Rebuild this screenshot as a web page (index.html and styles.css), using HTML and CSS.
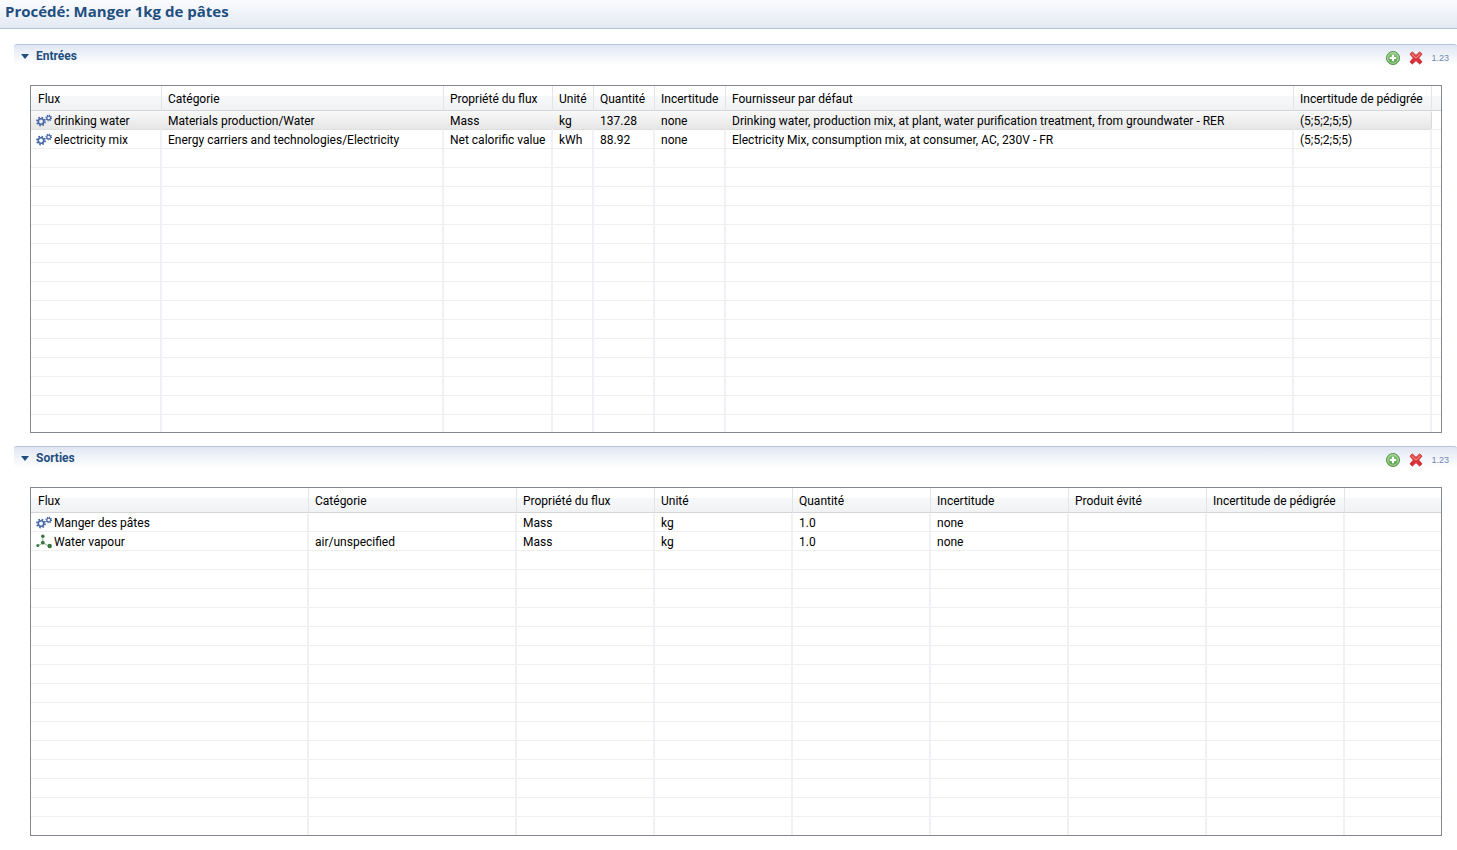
FILE: index.html
```html
<!DOCTYPE html>
<html lang="fr">
<head>
<meta charset="utf-8">
<title>Procédé: Manger 1kg de pâtes</title>
<link rel="stylesheet" href="styles.css">
</head>
<body>
<svg class="defs" aria-hidden="true">
  <defs>
    <linearGradient id="green" x1="0" y1="0" x2="0" y2="1"><stop offset="0" stop-color="#8cc87c"/><stop offset="1" stop-color="#4f9e45"/></linearGradient>
    <linearGradient id="red" x1="0" y1="0" x2="0" y2="1"><stop offset="0" stop-color="#e8564c"/><stop offset="1" stop-color="#d3202c"/></linearGradient>
    <symbol id="gears" viewBox="0 0 16 16">
      <g fill="none" stroke="#4668a8">
        <circle cx="5" cy="8.5" r="2.7" stroke-width="1.6"/>
        <circle cx="5" cy="8.5" r="4" stroke-width="1.8" stroke-dasharray="1.6 1.542"/>
        <circle cx="12.7" cy="5" r="1.9" stroke-width="1.2"/>
        <circle cx="12.7" cy="5" r="2.8" stroke-width="1.2" stroke-dasharray="1.1 1.099"/>
      </g>
    </symbol>
    <symbol id="molecule" viewBox="0 0 16 16">
      <path d="M6.8 2.5v6.2M6.8 8.7L2 12M6.8 8.7L13.5 12.5" fill="none" stroke="#8db596" stroke-width="1"/>
      <g fill="#38783f"><circle cx="6.8" cy="2.3" r="1.8"/><circle cx="6.8" cy="8.7" r="1.9"/><circle cx="1.8" cy="11.6" r="1.5"/><circle cx="13.7" cy="12" r="2.2"/></g>
    </symbol>
    <symbol id="add" viewBox="0 0 16 16">
      <circle cx="8" cy="8" r="6.5" fill="url(#green)" stroke="#55934b"/>
      <circle cx="8" cy="8" r="5.3" fill="none" stroke="#b5dca9" stroke-width="1"/>
      <path d="M8 4.8v6.4M4.8 8h6.4" stroke="#fff" stroke-width="2.2"/>
    </symbol>
    <symbol id="remove" viewBox="0 0 16 16">
      <path d="M2 4.2L4.3 2 8 5.4 11.7 2 14 4.2 10.6 8 14 11.8 11.7 14 8 10.6 4.3 14 2 11.8 5.4 8z" fill="url(#red)" stroke="#c9313a" stroke-width="1" stroke-linejoin="round"/>
      <path d="M3.6 4L8 8l4.4-4" fill="none" stroke="#f59a92" stroke-width="1"/>
    </symbol>
  </defs>
</svg>

<header class="form-head"><h1>Procédé: Manger 1kg de pâtes</h1></header>

<main class="form-body">
  <section class="section" aria-labelledby="entrees">
    <div class="section-bar">
      <h2 id="entrees"><button class="toggle" type="button" aria-expanded="true"><svg class="twistie" viewBox="0 0 8 5"><path d="M0 0h8L4 5z"/></svg>Entrées</button></h2>
      <div class="tools">
        <button type="button" aria-label="Ajouter"><svg class="icon"><use href="#add"/></svg></button>
        <button type="button" aria-label="Supprimer"><svg class="icon"><use href="#remove"/></svg></button>
        <button type="button" class="format">1.23</button>
      </div>
    </div>
    <div class="grid-box">
      <table class="grid">
        <colgroup><col class="w131"><col class="w282"><col class="w109"><col class="w41"><col class="w61"><col class="w71"><col class="w568"><col class="w138"><col></colgroup>
        <thead><tr><th>Flux</th><th>Catégorie</th><th>Propriété du flux</th><th>Unité</th><th>Quantité</th><th>Incertitude</th><th>Fournisseur par défaut</th><th>Incertitude de pédigrée</th><th></th></tr></thead>
        <tbody>
          <tr class="selected"><td><span class="flow"><svg class="icon"><use href="#gears"/></svg>drinking water</span></td><td>Materials production/Water</td><td>Mass</td><td>kg</td><td>137.28</td><td>none</td><td>Drinking water, production mix, at plant, water purification treatment, from groundwater - RER</td><td>(5;5;2;5;5)</td><td></td></tr>
          <tr><td><span class="flow"><svg class="icon"><use href="#gears"/></svg>electricity mix</span></td><td>Energy carriers and technologies/Electricity</td><td>Net calorific value</td><td>kWh</td><td>88.92</td><td>none</td><td>Electricity Mix, consumption mix, at consumer, AC, 230V - FR</td><td>(5;5;2;5;5)</td><td></td></tr>
          <tr class="blank"><td></td><td></td><td></td><td></td><td></td><td></td><td></td><td></td><td></td></tr>
        </tbody>
      </table>
    </div>
  </section>

  <section class="section" aria-labelledby="sorties">
    <div class="section-bar">
      <h2 id="sorties"><button class="toggle" type="button" aria-expanded="true"><svg class="twistie" viewBox="0 0 8 5"><path d="M0 0h8L4 5z"/></svg>Sorties</button></h2>
      <div class="tools">
        <button type="button" aria-label="Ajouter"><svg class="icon"><use href="#add"/></svg></button>
        <button type="button" aria-label="Supprimer"><svg class="icon"><use href="#remove"/></svg></button>
        <button type="button" class="format">1.23</button>
      </div>
    </div>
    <div class="grid-box">
      <table class="grid">
        <colgroup><col class="w278"><col class="w208"><col class="w138"><col class="w138"><col class="w138"><col class="w138"><col class="w138"><col class="w138"><col></colgroup>
        <thead><tr><th>Flux</th><th>Catégorie</th><th>Propriété du flux</th><th>Unité</th><th>Quantité</th><th>Incertitude</th><th>Produit évité</th><th>Incertitude de pédigrée</th><th></th></tr></thead>
        <tbody>
          <tr><td><span class="flow"><svg class="icon"><use href="#gears"/></svg>Manger des pâtes</span></td><td></td><td>Mass</td><td>kg</td><td>1.0</td><td>none</td><td></td><td></td><td></td></tr>
          <tr><td><span class="flow"><svg class="icon"><use href="#molecule"/></svg>Water vapour</span></td><td>air/unspecified</td><td>Mass</td><td>kg</td><td>1.0</td><td>none</td><td></td><td></td><td></td></tr>
          <tr class="blank tall"><td></td><td></td><td></td><td></td><td></td><td></td><td></td><td></td><td></td></tr>
        </tbody>
      </table>
    </div>
  </section>
</main>
</body>
</html>
```
FILE: styles.css
```css
* { box-sizing: border-box; }
body {
  margin: 0;
  background: #fff;
  color: #000;
  font: 12px/16px Roboto, "Open Sans", sans-serif;
}
button {
  display: flex;
  align-items: center;
  padding: 0;
  border: 0;
  background: none;
  color: inherit;
  font: inherit;
  cursor: pointer;
}
h1, h2 { margin: 0; color: #1f4e7f; font-weight: 700; }
.defs { position: absolute; width: 0; height: 0; }
.icon { flex: none; width: 16px; height: 16px; }

.form-head {
  padding: 0 5px 6px;
  background: linear-gradient(#fafbfd, #e3eaf4);
  border-bottom: 1px solid #b3c3d8;
}
h1 { font: 700 15px/22px "Open Sans", "Noto Sans", sans-serif; }
.form-body { padding: 15px 0 13px 14px; }

.section { margin-bottom: 13px; }
.section-bar {
  display: flex;
  justify-content: space-between;
  height: 24px;
  padding: 0 8px 0 7px;
  background: linear-gradient(#e0e7f3, #fff 90%);
  border-top: 1px solid #b6c6dc;
  border-radius: 3px 3px 0 0;
}
h2 { font-size: 12px; line-height: 22px; }
.toggle { gap: 7px; }
.twistie { width: 8px; height: 5px; fill: #1f4e7f; }
.tools { display: flex; gap: 7px; padding-top: 5px; }
.tools button { height: 16px; }
.tools .format { color: #7289b5; font: 9px "Liberation Sans", Arial, sans-serif; }

.grid-box {
  margin: 17px 15px 0 16px;
  border: 1px solid #828790;
  overflow: hidden;
}
.grid { width: 100%; table-layout: fixed; border-collapse: separate; border-spacing: 0; }
.grid th, .grid td {
  padding: 2px 0 0 6px;
  overflow: hidden;
  text-align: left;
  white-space: nowrap;
  font-weight: 400;
}
.grid th:first-child { padding-left: 7px; }
.grid td:first-child { padding-left: 5px; }
.grid th {
  height: 25px;
  background: linear-gradient(#fff 40%, #f7f8fa 41%, #f1f2f4);
  border-right: 1px solid #e2e4e8;
  border-bottom: 1px solid #d5d5d5;
}
.grid td {
  height: 19px;
  border-right: 2px solid #f1f1f5;
  border-bottom: 1px solid #efefef;
}
.grid th:last-child, .grid td:last-child { border-right: 0; }
.grid .selected td {
  background: linear-gradient(#f9f9f9, #e6e6e6);
  border-right-color: transparent;
  border-bottom-color: #dedede;
}
.grid .selected td:nth-child(8) { border-right: 1px solid #d9d9d9; border-radius: 0 2px 2px 0; }
.grid .selected td:last-child { background: none; border-bottom-color: #efefef; }
.grid .blank td {
  height: 283px;
  border-bottom: 0;
  background: repeating-linear-gradient(transparent 0 18px, #efefef 18px 19px);
}
.grid .tall td { height: 284px; }
.flow { display: flex; align-items: center; gap: 2px; }

.w41 { width: 41px; }
.w61 { width: 61px; }
.w71 { width: 71px; }
.w109 { width: 109px; }
.w131 { width: 131px; }
.w138 { width: 138px; }
.w208 { width: 208px; }
.w278 { width: 278px; }
.w282 { width: 282px; }
.w568 { width: 568px; }
```
